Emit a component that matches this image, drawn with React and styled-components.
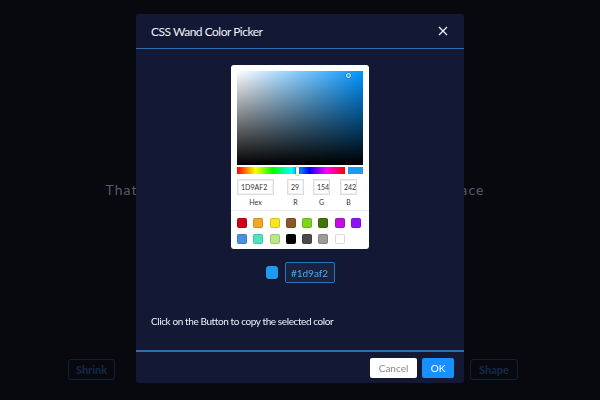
import React from 'react';
import styled, { createGlobalStyle } from 'styled-components';

const Global = createGlobalStyle`
  html, body {
    margin: 0;
    padding: 0;
    background: #08090f;
    font-family: Lato, "Noto Sans", sans-serif;
  }
  * { box-sizing: border-box; }
`

const Page = styled.div`
  width: 600px;
  height: 400px;
  display: flex;
  flex-direction: column;
  align-items: center;
  overflow: hidden;
`

const Tagline = styled.div`
  margin-top: 181px;
  margin-right: 10px;
  font-size: 14px;
  letter-spacing: 1.1px;
  color: #525b6d;
  white-space: nowrap;
`

const ActionRow = styled.div`
  margin-top: 161px;
  align-self: flex-start;
  padding-left: 68px;
  display: flex;
  gap: 86px;
`

const GhostButton = styled.button`
  width: ${p => p.w}px;
  height: 21px;
  background: transparent;
  border: 1px solid #12213a;
  border-radius: 3px;
  color: #15294a;
  font-family: inherit;
  font-size: 11px;
  font-weight: 700;
  padding: 0;
`

const Modal = styled.div`
  position: fixed;
  left: 136px;
  top: 14px;
  width: 328px;
  height: 369px;
  background: #131935;
  border-radius: 3px;
  display: flex;
  flex-direction: column;
`

const Header = styled.div`
  height: 35px;
  padding: 0 15px;
  display: flex;
  align-items: center;
  justify-content: space-between;
  border-bottom: 1px solid #2c70b0;
  color: #eef1f8;
  font-size: 12px;
  letter-spacing: -0.5px;
`

const Close = styled.button`
  background: none;
  border: none;
  padding: 0;
  width: 12px;
  height: 12px;
  display: flex;
  align-items: center;
  justify-content: center;
`

const Body = styled.div`
  flex: 1;
  display: flex;
  flex-direction: column;
  align-items: center;
  padding-top: 16px;
`

const Picker = styled.div`
  width: 138px;
  background: #fff;
  border-radius: 3px;
  padding: 6px 6px 5px;
`

const Saturation = styled.div`
  position: relative;
  height: 94px;
  background:
    linear-gradient(to top, #000, rgba(0,0,0,0)),
    linear-gradient(to right, #fff, hsl(205, 100%, 50%));
`

const SatPointer = styled.div`
  position: absolute;
  right: 12px;
  top: 2px;
  width: 5px;
  height: 5px;
  border-radius: 50%;
  border: 1px solid #fff;
  box-shadow: 0 0 0 0.5px rgba(0,0,0,0.4);
`

const HueRow = styled.div`
  display: flex;
  gap: 3px;
  margin-top: 2px;
`

const Hue = styled.div`
  position: relative;
  flex: 1;
  height: 7px;
  background: linear-gradient(to right, #f00 0%, #ff0 17%, #0f0 33%, #0ff 50%, #00f 67%, #f0f 83%, #f00 100%);
`

const HueHandle = styled.div`
  position: absolute;
  left: 59px;
  top: -0.5px;
  width: 3px;
  height: 8px;
  border-radius: 1px;
  background: #fff;
  box-shadow: 0 0 0 0.5px rgba(0,0,0,0.35);
`

const Preview = styled.div`
  width: 15px;
  height: 7px;
  background: #1d9af2;
`

const Fields = styled.div`
  display: flex;
  margin-top: 5px;
`

const Field = styled.div`
  width: ${p => p.w}px;
  margin-left: ${p => p.ml || 0}px;
  display: flex;
  flex-direction: column;
  align-items: center;
`

const Input = styled.div`
  width: 100%;
  height: 16px;
  border: 1px solid #ddd;
  box-shadow: inset 0 0 0 1px #f0f0f0;
  font-size: 7px;
  color: #333;
  display: flex;
  align-items: center;
  padding-left: 3px;
  white-space: nowrap;
  overflow: hidden;
`

const Label = styled.div`
  font-size: 7px;
  color: #333;
  margin-top: 3px;
`

const Divider = styled.div`
  height: 1px;
  background: #eee;
  margin: 4px -6px 7px;
`

const Swatches = styled.div`
  display: grid;
  grid-template-columns: repeat(8, 10px);
  column-gap: 6.3px;
  row-gap: 6px;
`

const Swatch = styled.div`
  width: 10px;
  height: 10px;
  border-radius: 2px;
  background: ${p => p.c};
  box-shadow: inset 0 0 0 1px rgba(0,0,0,0.15);
`

const CopyRow = styled.div`
  display: flex;
  align-items: center;
  gap: 7px;
  margin-top: 13px;
`

const Dot = styled.div`
  width: 12px;
  height: 13px;
  border-radius: 3px;
  background: #1d9af2;
`

const CopyButton = styled.button`
  width: 50px;
  height: 21px;
  border: 1px solid #2178bd;
  border-radius: 2px;
  background: #1b2240;
  color: #49a8f0;
  font-family: inherit;
  font-size: 10px;
  padding: 0;
`

const Hint = styled.div`
  align-self: flex-start;
  margin: 32px 0 0 15px;
  font-size: 10px;
  letter-spacing: -0.4px;
  color: #eef1f8;
`

const Footer = styled.div`
  height: 33px;
  border-top: 2px solid #2c70b0;
  display: flex;
  justify-content: flex-end;
  align-items: center;
  gap: 5px;
  padding: 0 10px 0 0;
`

const FootButton = styled.button`
  height: 20px;
  padding: 0;
  width: ${p => p.w}px;
  border-radius: 2px;
  font-family: inherit;
  font-size: 10px;
  border: none;
  background: ${p => p.primary ? '#1890ff' : '#fff'};
  color: ${p => p.primary ? '#fff' : '#8a8a8a'};
`

const presets = [
  '#D0021B', '#F5A623', '#F8E71C', '#8B572A', '#7ED321', '#417505', '#BD10E0', '#9013FE',
  '#4A90E2', '#50E3C2', '#B8E986', '#000000', '#4A4A4A', '#9B9B9B', '#FFFFFF',
]

export default function App() {
  return (
    <Page>
      <Global />
      <Tagline>That is the colour you pick for one shape in its space</Tagline>
      <ActionRow>
        <GhostButton w={47}>Shrink</GhostButton>
        <GhostButton w={49}>Grow</GhostButton>
        <GhostButton w={48}>Rotate</GhostButton>
        <GhostButton w={48}>Shape</GhostButton>
      </ActionRow>

      <Modal>
        <Header>
          <span>CSS Wand Color Picker</span>
          <Close>
            <svg width="10" height="10" viewBox="0 0 10 10">
              <path d="M1 1L9 9M9 1L1 9" stroke="#eef1f8" strokeWidth="1.3" />
            </svg>
          </Close>
        </Header>
        <Body>
          <Picker>
            <Saturation><SatPointer /></Saturation>
            <HueRow>
              <Hue><HueHandle /></Hue>
              <Preview />
            </HueRow>
            <Fields>
              <Field w={37}><Input>1D9AF2</Input><Label>Hex</Label></Field>
              <Field w={17} ml={13}><Input>29</Input><Label>R</Label></Field>
              <Field w={17} ml={9}><Input>154</Input><Label>G</Label></Field>
              <Field w={17} ml={10}><Input>242</Input><Label>B</Label></Field>
            </Fields>
            <Divider />
            <Swatches>
              {presets.map(c => <Swatch key={c} c={c} />)}
            </Swatches>
          </Picker>
          <CopyRow>
            <Dot />
            <CopyButton>#1d9af2</CopyButton>
          </CopyRow>
          <Hint>Click on the Button to copy the selected color</Hint>
        </Body>
        <Footer>
          <FootButton w={47}>Cancel</FootButton>
          <FootButton w={32} primary>OK</FootButton>
        </Footer>
      </Modal>
    </Page>
  );
}
